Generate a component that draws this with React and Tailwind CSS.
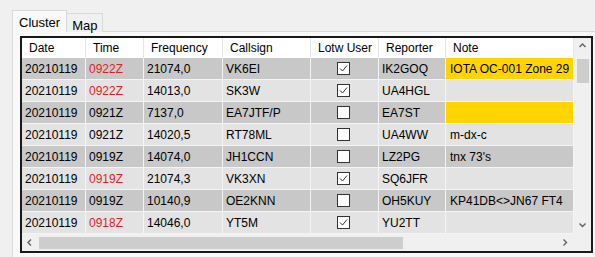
const cols = [
  { key: 'date', label: 'Date', w: 'w-[64px]' },
  { key: 'time', label: 'Time', w: 'w-[58px]' },
  { key: 'freq', label: 'Frequency', w: 'w-[79px]' },
  { key: 'call', label: 'Callsign', w: 'w-[88px]' },
  { key: 'lotw', label: 'Lotw User', w: 'w-[68px]' },
  { key: 'rep', label: 'Reporter', w: 'w-[67px]' },
  { key: 'note', label: 'Note', w: 'w-[128px]' },
];

const rows = [
  { date: '20210119', time: '0922Z', red: true, freq: '21074,0', call: 'VK6EI', lotw: true, rep: 'IK2GOQ', note: 'IOTA OC-001 Zone 29', hl: true },
  { date: '20210119', time: '0922Z', red: true, freq: '14013,0', call: 'SK3W', lotw: true, rep: 'UA4HGL', note: '' },
  { date: '20210119', time: '0921Z', freq: '7137,0', call: 'EA7JTF/P', lotw: false, rep: 'EA7ST', note: '', hl: true },
  { date: '20210119', time: '0921Z', freq: '14020,5', call: 'RT78ML', lotw: false, rep: 'UA4WW', note: 'm-dx-c' },
  { date: '20210119', time: '0919Z', freq: '14074,0', call: 'JH1CCN', lotw: false, rep: 'LZ2PG', note: "tnx 73's" },
  { date: '20210119', time: '0919Z', red: true, freq: '21074,3', call: 'VK3XN', lotw: true, rep: 'SQ6JFR', note: '' },
  { date: '20210119', time: '0919Z', freq: '10140,9', call: 'OE2KNN', lotw: false, rep: 'OH5KUY', note: 'KP41DB<>JN67 FT4' },
  { date: '20210119', time: '0918Z', red: true, freq: '14046,0', call: 'YT5M', lotw: true, rep: 'YU2TT', note: '' },
];

function Check({ on }) {
  return (
    <div className="w-[13px] h-[13px] border border-[#333] bg-white flex items-center justify-center">
      {on && (
        <svg width="11" height="11" viewBox="0 0 11 11">
          <path d="M2 5.5 L4.5 8 L9 2.5" fill="none" stroke="#333" strokeWidth="1" />
        </svg>
      )}
    </div>
  );
}

function Chevron({ dir }) {
  const d = {
    up: 'M1.5 5 L4.5 2 L7.5 5',
    down: 'M1.5 2.5 L4.5 5.5 L7.5 2.5',
    left: 'M5 1.5 L2 4.5 L5 7.5',
    right: 'M2.5 1.5 L5.5 4.5 L2.5 7.5',
  }[dir];
  return (
    <svg width="9" height="9" viewBox="0 0 9 9">
      <path d={d} fill="none" stroke="#606060" strokeWidth="1.4" />
    </svg>
  );
}

export default function App() {
  return (
    <div className="w-[595px] h-[257px] bg-[#f0f0f0] overflow-hidden text-[12px] text-black" style={{ fontFamily: '"Liberation Sans", Arial, sans-serif' }}>
      <div className="pl-[12px] pt-[10px]">
        <div className="flex items-end h-[22px]">
          <div className="h-[22px] px-[6px] pt-[2px] border border-b-0 border-[#d9d9d9] bg-[#f9f9f9] text-[13px] relative z-10">Cluster</div>
          <div className="h-[19px] px-[5px] pt-[2px] border border-l-0 border-b-0 border-[#d9d9d9] bg-[#f0f0f0] text-[13px]">Map</div>
        </div>
        <div className="h-[230px] border border-[#d9d9d9] border-r-0 bg-[#f9f9f9] pl-[7px] pt-[4px] -mt-px">
          <div className="w-[573px] border-2 border-[#1a1a1a] bg-[#f0f0f0]">
            <div className="flex">
              <div className="flex flex-col">
                <div className="flex h-[20px] bg-white">
                  {cols.map((c) => (
                    <div key={c.key} className={`${c.w} shrink-0 border-r border-[#e5e5e5] px-[7px] flex items-center whitespace-nowrap`}>
                      {c.label}
                    </div>
                  ))}
                </div>
                {rows.map((r, i) => {
                  const bg = i % 2 === 0 ? 'bg-[#c8c8c8]' : 'bg-[#e3e3e3]';
                  return (
                    <div key={i} className="flex h-[22px]">
                      <div className={`w-[64px] shrink-0 ${bg} border-r border-b border-[#f4f4f4] px-[3px] flex items-center`}>{r.date}</div>
                      <div className={`w-[58px] shrink-0 ${bg} border-r border-b border-[#f4f4f4] px-[3px] flex items-center ${r.red ? 'text-[#e41e26]' : ''}`}>{r.time}</div>
                      <div className={`w-[79px] shrink-0 ${bg} border-r border-b border-[#f4f4f4] px-[3px] flex items-center`}>{r.freq}</div>
                      <div className={`w-[88px] shrink-0 ${bg} border-r border-b border-[#f4f4f4] px-[3px] flex items-center`}>{r.call}</div>
                      <div className={`w-[68px] shrink-0 ${bg} border-r border-b border-[#f4f4f4] flex items-center justify-center pr-[2px]`}>
                        <Check on={r.lotw} />
                      </div>
                      <div className={`w-[67px] shrink-0 ${bg} border-r border-b border-[#f4f4f4] px-[3px] flex items-center`}>{r.rep}</div>
                      <div className={`w-[128px] shrink-0 ${r.hl ? 'bg-[#ffd400]' : bg} border-r border-b border-[#f4f4f4] px-[4px] flex items-center whitespace-nowrap overflow-hidden`}>{r.note}</div>
                    </div>
                  );
                })}
              </div>
              <div className="w-[17px] shrink-0 flex flex-col items-center bg-[#f0f0f0]">
                <div className="h-[17px] flex items-center justify-center"><Chevron dir="up" /></div>
                <div className="w-[12px] h-[24px] bg-[#cdcdcd] mt-[4px]" />
                <div className="flex-1" />
                <div className="h-[17px] flex items-center justify-center"><Chevron dir="down" /></div>
              </div>
            </div>
            <div className="flex h-[17px] items-center">
              <div className="w-[17px] flex items-center justify-center"><Chevron dir="left" /></div>
              <div className="w-[364px] h-[12px] bg-[#cdcdcd]" />
              <div className="flex-1" />
              <div className="w-[17px] flex items-center justify-center"><Chevron dir="right" /></div>
              <div className="w-[17px]" />
            </div>
          </div>
        </div>
      </div>
    </div>
  );
}
